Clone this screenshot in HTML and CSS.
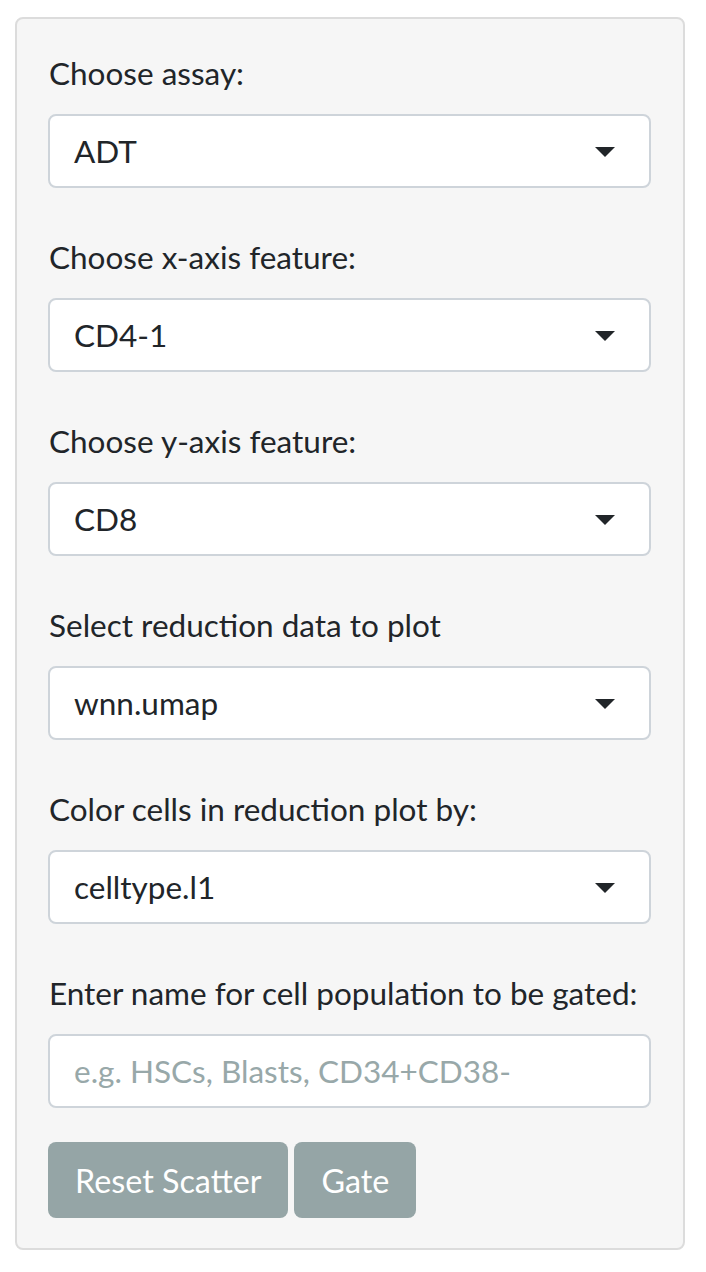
FILE: index.html
```html
<!DOCTYPE html>
<html>
<head>
<meta charset="utf-8">
<link rel="stylesheet" href="styles.css">
</head>
<body>
<div class="well">
  <div class="form-group">
    <label class="label">Choose assay:</label>
    <div class="select"><span class="value">ADT</span><span class="caret"></span></div>
  </div>
  <div class="form-group">
    <label class="label">Choose x-axis feature:</label>
    <div class="select"><span class="value">CD4-1</span><span class="caret"></span></div>
  </div>
  <div class="form-group">
    <label class="label">Choose y-axis feature:</label>
    <div class="select"><span class="value">CD8</span><span class="caret"></span></div>
  </div>
  <div class="form-group">
    <label class="label">Select reduction data to plot</label>
    <div class="select"><span class="value">wnn.umap</span><span class="caret"></span></div>
  </div>
  <div class="form-group">
    <label class="label">Color cells in reduction plot by:</label>
    <div class="select"><span class="value">celltype.l1</span><span class="caret"></span></div>
  </div>
  <div class="form-group last">
    <label class="label">Enter name for cell population to be gated:</label>
    <input class="text-input" type="text" placeholder="e.g. HSCs, Blasts, CD34+CD38-">
  </div>
  <div class="buttons">
    <button class="btn">Reset Scatter</button>
    <button class="btn">Gate</button>
  </div>
</div>
</body>
</html>
```

FILE: styles.css
```css
html, body {
  margin: 0;
  padding: 0;
  background: #ffffff;
}
body {
  font-family: Lato, "Open Sans", sans-serif;
  color: #212529;
  font-size: 31.5px;
  line-height: 45px;
}
.well {
  box-sizing: border-box;
  margin: 17px 0 0 15px;
  width: 670px;
  height: 1233px;
  padding: 32px;
  background: #f6f6f6;
  border: 2px solid #dcdcdc;
  border-radius: 8px;
}
.form-group {
  margin-bottom: 47px;
}
.form-group.last {
  margin-bottom: 34px;
}
.label {
  display: block;
  height: 45px;
  margin-bottom: 18px;
}
.select, .text-input {
  box-sizing: border-box;
  width: 603px;
  height: 74px;
  margin-left: -1px;
  background: #ffffff;
  border: 2px solid #ced4da;
  border-radius: 8px;
  display: flex;
  align-items: center;
  padding: 0 34px 0 24px;
  font-family: inherit;
  font-size: 31.5px;
  color: #212529;
}
.select .value {
  flex: 1;
}
.caret {
  width: 0;
  height: 0;
  border-left: 10px solid transparent;
  border-right: 10px solid transparent;
  border-top: 10px solid #212529;
  margin-top: 2px;
}
.text-input {
  outline: none;
}
.text-input::placeholder {
  color: #98a8a9;
}
.buttons {
  display: flex;
  gap: 6px;
  margin-left: -1px;
}
.btn {
  height: 76px;
  padding: 0 27px;
  border: none;
  border-radius: 8px;
  background: #95a5a6;
  color: #ffffff;
  font-family: inherit;
  font-size: 32.3px;
}
```
